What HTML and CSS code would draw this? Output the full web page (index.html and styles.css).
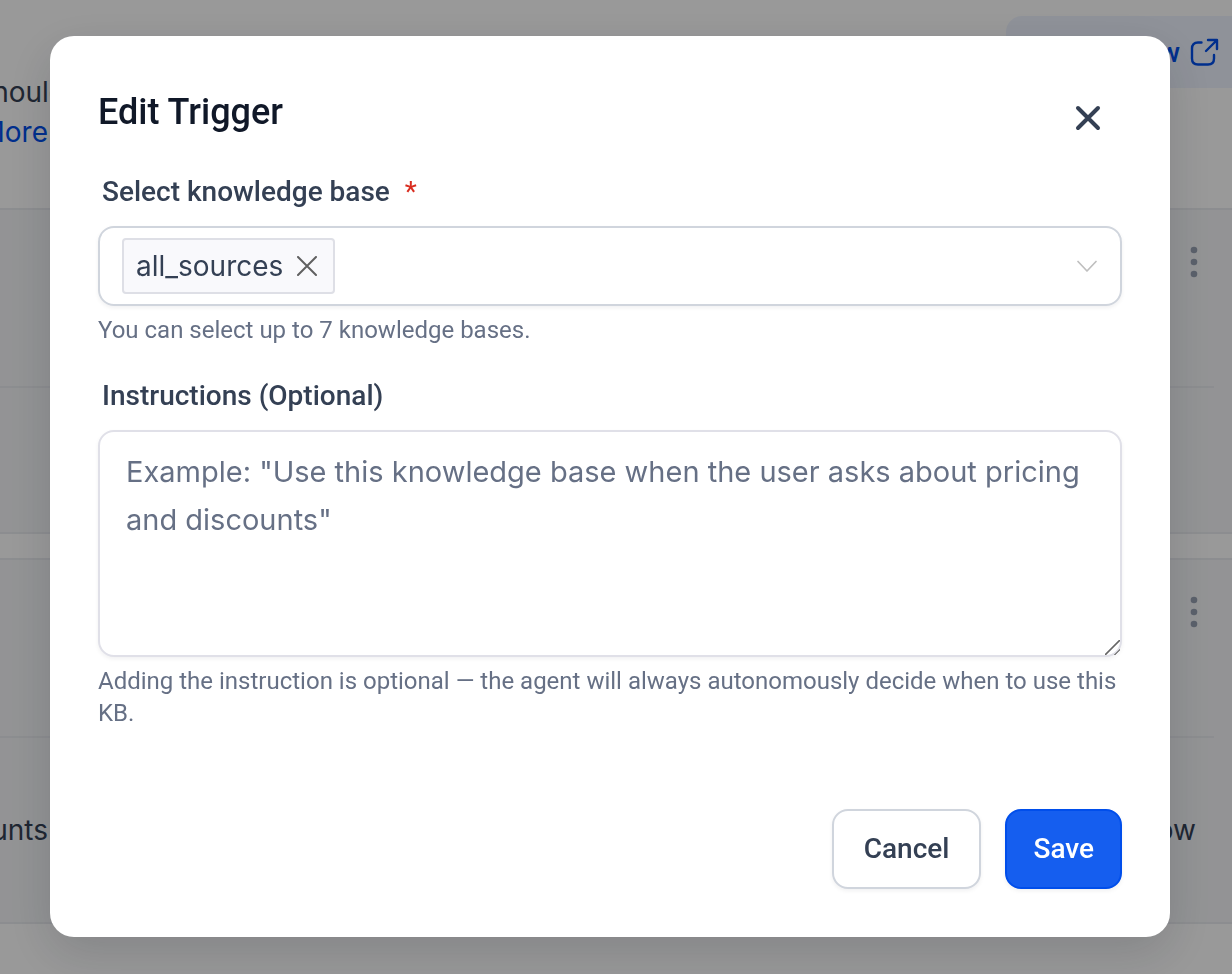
FILE: index.html
```
<!DOCTYPE html>
<html lang="en">
<head>
  <meta charset="utf-8">
  <title>Edit Trigger</title>
  <link rel="stylesheet" href="styles.css">
</head>
<body>
  <main class="page" inert>
    <header class="page-header">
      <div class="intro">
        <p>should</p>
        <a href="#">More</a>
      </div>
      <button type="button" class="preview">
        Preview
        <svg width="32" height="32" viewBox="0 0 32 32" fill="none" stroke="currentColor" stroke-width="2.4" stroke-linecap="round" stroke-linejoin="round">
          <path d="M13.500 6.500H10Q4 6.500 4 12.500V22.500Q4 28.500 10 28.500H20Q26 28.500 26 22.500V19"/>
          <path d="M18 15L29 4M20 4H29V13"/>
        </svg>
      </button>
    </header>

    <section class="card">
      <div class="card-head">
        <button type="button" class="kebab" aria-label="Options">
          <svg width="8" height="32" viewBox="0 0 8 32" fill="currentColor"><circle cx="4" cy="4" r="3.3"/><circle cx="4" cy="16" r="3.3"/><circle cx="4" cy="28" r="3.3"/></svg>
        </button>
      </div>
      <div class="card-body"></div>
    </section>

    <section class="card">
      <div class="card-head">
        <button type="button" class="kebab" aria-label="Options">
          <svg width="8" height="32" viewBox="0 0 8 32" fill="currentColor"><circle cx="4" cy="4" r="3.3"/><circle cx="4" cy="16" r="3.3"/><circle cx="4" cy="28" r="3.3"/></svg>
        </button>
      </div>
      <div class="card-body card-body-tall">
        <span class="text-start">discounts</span>
        <span>now</span>
      </div>
    </section>
  </main>

  <div class="overlay">
    <form class="modal" role="dialog" aria-modal="true" aria-labelledby="modalTitle">
      <div class="modal-header">
        <h1 id="modalTitle">Edit Trigger</h1>
        <button type="button" class="close" aria-label="Close">
          <svg width="28" height="28" viewBox="0 0 28 28" fill="none" stroke="currentColor" stroke-width="4" stroke-linecap="round"><path d="M4 4L24 24M24 4L4 24"/></svg>
        </button>
      </div>

      <div class="field">
        <label for="knowledgeBase">Select knowledge base <span class="required">*</span></label>
        <div class="select">
          <span class="tag">
            all_sources
            <button type="button" aria-label="Remove all_sources">
              <svg width="20" height="20" viewBox="0 0 20 20" fill="none" stroke="currentColor" stroke-width="2" stroke-linecap="round"><path d="M1 1L19 19M19 1L1 19"/></svg>
            </button>
          </span>
          <input type="text" id="knowledgeBase" role="combobox" aria-expanded="false">
          <svg class="chevron" width="22" height="12" viewBox="0 0 22 12" fill="none" stroke="currentColor" stroke-width="1.7" stroke-linecap="round" stroke-linejoin="round"><path d="M2 1.500L11 11L20 1.500"/></svg>
        </div>
        <p class="help">You can select up to 7 knowledge bases.</p>
      </div>

      <div class="field">
        <label for="instructions">Instructions (Optional)</label>
        <textarea id="instructions" placeholder="Example: &quot;Use this knowledge base when the user asks about pricing and discounts&quot;"></textarea>
        <p class="help">Adding the instruction is optional — the agent will always autonomously decide when to use this KB.</p>
      </div>

      <div class="actions">
        <button type="button" class="btn">Cancel</button>
        <button type="submit" class="btn btn-primary">Save</button>
      </div>
    </form>
  </div>
</body>
</html>
```
FILE: styles.css
```
* {
  box-sizing: border-box;
}

body {
  margin: 0;
  overflow: hidden;
  background: #fff;
  color: #344054;
  font-family: Inter, sans-serif;
  font-size: 28px;
}

p {
  margin: 0;
}

button {
  padding: 0;
  border: none;
  background: none;
  color: inherit;
  font-family: Roboto, sans-serif;
  cursor: pointer;
}

svg {
  display: block;
}

/* Page behind the modal */
.page-header {
  display: flex;
  justify-content: space-between;
  align-items: flex-start;
  height: 208px;
  padding-top: 16px;
}

.intro {
  display: flex;
  flex-direction: column;
  align-items: flex-end;
  width: 48px;
  padding-top: 56px;
  line-height: 40px;
}

.intro p {
  margin-right: -18px;
}

.intro a {
  color: #004eeb;
  text-decoration: none;
}

.preview {
  display: flex;
  justify-content: flex-end;
  align-items: center;
  gap: 8px;
  width: 240px;
  height: 72px;
  margin-right: -14px;
  padding-right: 26px;
  border-radius: 16px;
  background: #eff4ff;
  color: #004eeb;
  font-size: 28px;
  font-weight: 500;
}

.card {
  margin-bottom: 24px;
  border-top: 2px solid #eaecf0;
  border-bottom: 2px solid #eaecf0;
  background: #f5f6f8;
}

.card-head {
  display: flex;
  justify-content: flex-end;
  height: 178px;
  margin-right: 18px;
  padding-top: 36px;
  padding-right: 16px;
  border-bottom: 2px solid #eaecf0;
}

.kebab {
  align-self: flex-start;
  color: #98a2b3;
}

.card-body {
  height: 144px;
}

.card-body-tall {
  display: flex;
  justify-content: space-between;
  align-items: center;
  height: 184px;
  padding-right: 36px;
}

.text-start {
  display: flex;
  justify-content: flex-end;
  width: 48px;
}

/* Modal */
.overlay {
  position: fixed;
  inset: 0;
  padding: 36px 62px 36px 50px;
  background: rgba(0, 0, 0, 0.4);
}

.modal {
  padding: 48px;
  border-radius: 24px;
  background: #fff;
  box-shadow: 0 16px 48px rgba(16, 24, 40, 0.16);
  font-family: Roboto, sans-serif;
}

.modal-header {
  display: flex;
  justify-content: space-between;
  align-items: flex-start;
}

.modal-header h1 {
  margin: 0;
  color: #101828;
  font-size: 36px;
  font-weight: 500;
  line-height: 56px;
}

.close {
  display: flex;
  justify-content: center;
  align-items: center;
  width: 48px;
  height: 48px;
  margin-top: 10px;
  margin-right: 10px;
}

.field {
  margin-top: 28px;
}

.field label {
  display: block;
  margin-bottom: 12px;
  padding-left: 4px;
  font-weight: 500;
  line-height: 44px;
}

.required {
  margin-left: 8px;
  color: #d92d20;
  font-weight: 400;
}

.select {
  display: flex;
  align-items: center;
  height: 80px;
  padding: 0 22px;
  border: 2px solid #d0d5dd;
  border-radius: 16px;
  box-shadow: 0 2px 4px rgba(16, 24, 40, 0.06);
}

.tag {
  display: flex;
  align-items: center;
  gap: 14px;
  height: 56px;
  padding: 0 16px 0 12px;
  border: 2px solid #dedfe6;
  border-radius: 4px;
  background: #f9f9fc;
  font-family: Inter, sans-serif;
}

.tag button {
  color: #606060;
}

.select input {
  flex: 1;
  min-width: 0;
  border: none;
  outline: none;
  background: none;
  font: inherit;
}

.chevron {
  color: #bfbfbf;
}

.help {
  margin-top: 8px;
  color: #667085;
  font-size: 24px;
  line-height: 32px;
}

textarea {
  display: block;
  width: 100%;
  height: 227px;
  padding: 16px 26px;
  border: 2px solid #e0e0e8;
  border-radius: 16px;
  box-shadow: 0 2px 4px rgba(16, 24, 40, 0.06);
  font-family: Inter, sans-serif;
  font-size: 29px;
  line-height: 48px;
  resize: vertical;
}

textarea::placeholder {
  color: #667085;
}

textarea::-webkit-resizer {
  background: linear-gradient(135deg, transparent 46%, #666 47%, #666 53%, transparent 54%, transparent 78%, #888 79%, #888 84%, transparent 85%);
}

.actions {
  display: flex;
  justify-content: flex-end;
  gap: 24px;
  margin-top: 80px;
}

.btn {
  height: 80px;
  padding: 0 30px 2px;
  border: 2px solid #d0d5dd;
  border-radius: 16px;
  background: #fff;
  box-shadow: 0 2px 4px rgba(16, 24, 40, 0.06);
  font-size: 28px;
  font-weight: 500;
}

.btn-primary {
  padding: 0 26px 2px;
  border-color: #004eeb;
  background: #155eef;
  color: #fff;
}
```
